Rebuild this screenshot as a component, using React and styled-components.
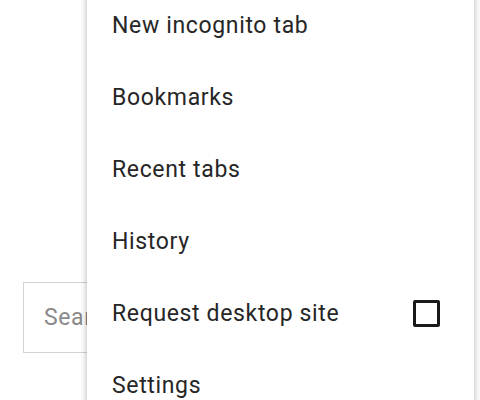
import React from "react";
import styled, { createGlobalStyle } from "styled-components";

const Global = createGlobalStyle`
  html, body { margin: 0; padding: 0; background: #fff; }
  body { font-family: Roboto, "Noto Sans", sans-serif; width: 480px; height: 400px; overflow: hidden; }
`;

const Page = styled.div`
  position: relative;
  width: 480px;
  height: 400px;
  overflow: hidden;
  background: #fff;
`;

const Content = styled.div`
  padding: 282px 0 0 23px;
`;

const SearchBox = styled.div`
  box-sizing: border-box;
  width: 300px;
  height: 71px;
  border: 1px solid #d4d4d4;
  display: flex;
  align-items: center;
  padding-left: 20px;
  font-size: 23px;
  letter-spacing: 0.6px;
  color: #8a8a8a;
`;

const Menu = styled.div`
  position: absolute;
  top: -11px;
  left: 87px;
  width: 387px;
  background: #fff;
  box-shadow: 0 0 7px rgba(0, 0, 0, 0.3);
  display: flex;
  flex-direction: column;
`;

const Item = styled.div`
  height: 72px;
  display: flex;
  align-items: center;
  justify-content: space-between;
  padding: 0 34px 0 25px;
  font-size: 23px;
  color: #262626;
  letter-spacing: 0.65px;
`;

const Checkbox = styled.span`
  box-sizing: border-box;
  width: 27px;
  height: 27px;
  border: 3px solid #1a1a1a;
  border-radius: 2px;
`;

const items = [
  { label: "New incognito tab" },
  { label: "Bookmarks" },
  { label: "Recent tabs" },
  { label: "History" },
  { label: "Request desktop site", checkbox: true },
  { label: "Settings" },
];

export default function App() {
  return (
    <>
      <Global />
      <Page>
        <Content>
          <SearchBox>Search</SearchBox>
        </Content>
        <Menu>
          {items.map((it) => (
            <Item key={it.label}>
              <span>{it.label}</span>
              {it.checkbox && <Checkbox />}
            </Item>
          ))}
        </Menu>
      </Page>
    </>
  );
}
